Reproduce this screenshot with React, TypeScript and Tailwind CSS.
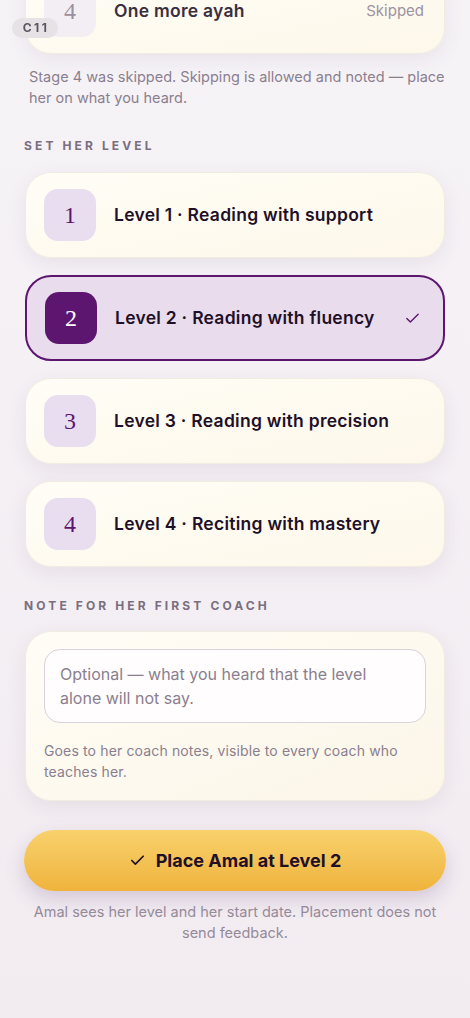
import { Check } from "lucide-react";

const levels = [
  { n: 1, label: "Level 1 · Reading with support" },
  { n: 2, label: "Level 2 · Reading with fluency" },
  { n: 3, label: "Level 3 · Reading with precision" },
  { n: 4, label: "Level 4 · Reciting with mastery" },
];

const selected = 2;

export default function App() {
  return (
    <div
      className="relative min-h-[1018px] overflow-hidden bg-gradient-to-b from-[#f6f3f7] to-[#f2ecf1] px-6 pb-20"
      style={{ fontFamily: "Inter, 'Noto Sans', sans-serif" }}
    >
      <div className="fixed left-3 top-[18px] z-10 flex h-5 w-[46px] items-center justify-center rounded-full bg-[#e6e2e5] pl-[2px] text-[12px] font-bold tracking-[0.2em] text-[#5a5460]">
        C11
      </div>

      {/* previous stage card, scrolled off the top */}
      <div className="mx-px -mt-8 flex h-[86px] items-center rounded-[26px] border border-[#f1ece2] bg-gradient-to-br from-[#fffdf6] to-[#fdf8ea] px-[18px] shadow-[0_6px_20px_rgba(80,50,90,0.08)]">
        <div className="flex h-[52px] w-[52px] items-center justify-center rounded-[14px] bg-[#f3eef4] text-[24px] text-[#9a90a0]" style={{ fontFamily: "'Liberation Serif', serif" }}>
          4
        </div>
        <div className="ml-[18px] flex-1 text-[17.5px] font-semibold tracking-[0.015em] text-[#3a2e40]">One more ayah</div>
        <div className="mr-[2px] text-[15px] text-[#9d93a2]">Skipped</div>
      </div>

      <p className="-mr-2 mt-3 pl-[5px] text-[14.5px] leading-[21px] text-[#8a7f8f]">
        Stage 4 was skipped. Skipping is allowed and noted — place her on what you heard.
      </p>

      <h2 className="mt-[30px] text-[12px] font-bold leading-4 tracking-[0.26em] text-[#7a6e80]">SET HER LEVEL</h2>

      <div className="mt-[18px] flex flex-col gap-[17px]">
        {levels.map((l) => {
          const on = l.n === selected;
          return (
            <div
              key={l.n}
              className={`mx-px flex h-[86px] items-center rounded-[26px] px-[18px] ${
                on
                  ? "border-2 border-[#5c1670] bg-[#e9dcec]"
                  : "border border-[#f1ece2] bg-gradient-to-br from-[#fffdf6] to-[#fdf8ea] shadow-[0_6px_20px_rgba(80,50,90,0.08)]"
              }`}
            >
              <div
                className={`flex h-[52px] w-[52px] items-center justify-center rounded-[14px] text-[24px] ${
                  on ? "bg-[#5c1670] text-white" : "bg-[#e9def0] text-[#5c1670]"
                }`}
                style={{ fontFamily: "'Liberation Serif', serif" }}
              >
                {l.n}
              </div>
              <div className="ml-[18px] flex-1 text-[17.5px] font-semibold tracking-[0.015em] text-[#1f1028]">{l.label}</div>
              {on && <Check size={17} strokeWidth={2} className="mr-[4px] text-[#5c1670]" />}
            </div>
          );
        })}
      </div>

      <h2 className="mt-[31px] text-[12px] font-bold leading-4 tracking-[0.26em] text-[#7a6e80]">
        NOTE FOR HER FIRST COACH
      </h2>

      <div className="mx-px mt-[17px] rounded-[26px] border border-[#f1ece2] bg-gradient-to-br from-[#fffdf6] to-[#fcf6e8] px-[18px] pb-[18px] pt-[17px] shadow-[0_6px_20px_rgba(80,50,90,0.08)]">
        <textarea
          rows={2}
          placeholder="Optional — what you heard that the level alone will not say."
          className="block h-[74px] w-full resize-none rounded-[16px] border border-[#d9d1dc] bg-[#fffdfd] px-[15px] pt-[12px] text-[16px] leading-6 text-[#1f1028] outline-none placeholder:text-[#8a7f8f]"
        />
        <p className="mt-[17px] text-[14px] leading-[21px] tracking-[0.01em] text-[#8a7f8f]">
          Goes to her coach notes, visible to every coach who teaches her.
        </p>
      </div>

      <button className="mt-[29px] flex h-[61px] w-full items-center justify-center gap-[10px] rounded-full bg-gradient-to-b from-[#f8d26c] to-[#efb33b] text-[18px] font-bold text-[#1f1028] shadow-[0_8px_20px_rgba(90,50,110,0.2)]">
        <Check size={17} strokeWidth={2.4} />
        <span>Place Amal at Level 2</span>
      </button>

      <p className="mt-[10px] text-center text-[14.5px] leading-[21px] text-[#958a99]">
        Amal sees her level and her start date. Placement does not send feedback.
      </p>
    </div>
  );
}
